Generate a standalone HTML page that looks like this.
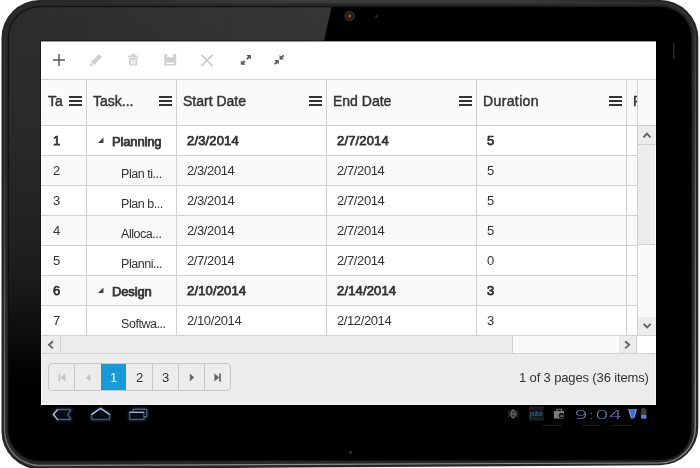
<!DOCTYPE html>
<html>
<head>
<meta charset="utf-8">
<title>TreeGrid</title>
<style>
html,body{margin:0;padding:0;}
body{width:700px;height:468px;overflow:hidden;background:#fff;position:relative;font-family:"Liberation Sans",sans-serif;}
.abs{position:absolute;}
#screen{position:absolute;left:41px;top:41px;width:615px;height:364px;background:#fff;overflow:hidden;font-size:13px;color:#333;box-shadow:0 0 0 1px rgba(0,0,0,0.35);}
.hl{position:absolute;left:0;height:1px;background:#d1d1d1;}
.vl{position:absolute;width:1px;background:#d1d1d1;}
.hd,.c,.pg,.pi{will-change:transform;}
.hd{position:absolute;top:52px;font-size:14px;color:#333;-webkit-text-stroke:0.45px #333;white-space:nowrap;line-height:16px;}
.mn{position:absolute;top:55px;width:13px;height:10px;}
.mn i{position:absolute;left:0;width:13px;height:2px;background:#333;}
.c{position:absolute;white-space:nowrap;line-height:16px;font-size:13px;color:#333;letter-spacing:-0.4px;}
.pg{position:absolute;top:15.5px;width:25px;text-align:center;font-size:13px;line-height:16px;color:#333;}
.b{-webkit-text-stroke:0.75px #333;letter-spacing:0.15px;}
.t{font-size:12.5px;letter-spacing:-0.45px;}
.b.t{font-size:13px;letter-spacing:-0.15px;}
</style>
</head>
<body>
<svg class="abs" id="tab" style="left:0;top:0" width="700" height="468" viewBox="0 0 700 468">
 <defs>
  <linearGradient id="lg1" gradientUnits="userSpaceOnUse" x1="0" y1="0" x2="115" y2="538"><stop offset="0" stop-color="#303030"/><stop offset="0.3" stop-color="#383838"/><stop offset="0.374" stop-color="#464646"/><stop offset="0.638" stop-color="#6a6a6a"/><stop offset="0.85" stop-color="#777"/><stop offset="0.96" stop-color="#959595"/><stop offset="1" stop-color="#888"/></linearGradient>
  <linearGradient id="gg" x1="0" y1="0" x2="0" y2="1"><stop offset="0" stop-color="#2d2d2d"/><stop offset="0.3" stop-color="#292929"/><stop offset="0.5" stop-color="#212121"/><stop offset="0.6" stop-color="#1b1b1b"/><stop offset="0.72" stop-color="#0c0c0c"/><stop offset="0.83" stop-color="#000"/></linearGradient>
  <linearGradient id="tg" x1="0" y1="0" x2="1" y2="0"><stop offset="0.04" stop-color="#fff" stop-opacity="0"/><stop offset="0.4" stop-color="#fff" stop-opacity="0.1"/><stop offset="0.75" stop-color="#fff" stop-opacity="0.1"/><stop offset="0.97" stop-color="#fff" stop-opacity="0"/></linearGradient>
  <linearGradient id="hg" x1="0" y1="0" x2="1" y2="0"><stop offset="0" stop-color="#fff" stop-opacity="0"/><stop offset="1" stop-color="#fff" stop-opacity="0.045"/></linearGradient>
  <clipPath id="cin"><path d="M39.50 7.30H660.30A30.70 30.70 0 0 1 691.00 38.00V428.94A30.70 30.70 0 0 1 660.30 459.64L39.50 460.26A30.70 30.70 0 0 1 8.80 429.56V38.00A30.70 30.70 0 0 1 39.50 7.30Z"/></clipPath>
 </defs>
 <path d="M39.50 0.00H660.30A38.00 38.00 0 0 1 698.30 38.00V427.25A38.00 38.00 0 0 1 660.30 465.25L39.50 469.25A38.00 38.00 0 0 1 1.50 431.25V38.00A38.00 38.00 0 0 1 39.50 0.00Z" fill="#252525"/>
 <path d="M39.50 2.40H660.30A35.60 35.60 0 0 1 695.90 38.00V427.80A35.60 35.60 0 0 1 660.30 463.40L39.50 466.30A35.60 35.60 0 0 1 3.90 430.70V38.00A35.60 35.60 0 0 1 39.50 2.40Z" fill="url(#lg1)"/>
 <path d="M39.50 3.70H660.30A34.30 34.30 0 0 1 694.60 38.00V428.10A34.30 34.30 0 0 1 660.30 462.40L39.50 464.70A34.30 34.30 0 0 1 5.20 430.40V38.00A34.30 34.30 0 0 1 39.50 3.70Z" fill="#272727"/>
 <path d="M39.50 6.30H660.30A31.70 31.70 0 0 1 692.00 38.00V428.71A31.70 31.70 0 0 1 660.30 460.41L39.50 461.49A31.70 31.70 0 0 1 7.80 429.79V38.00A31.70 31.70 0 0 1 39.50 6.30Z" fill="#101010"/>
 <path d="M39.50 7.30H660.30A30.70 30.70 0 0 1 691.00 38.00V428.94A30.70 30.70 0 0 1 660.30 459.64L39.50 460.26A30.70 30.70 0 0 1 8.80 429.56V38.00A30.70 30.70 0 0 1 39.50 7.30Z" fill="#000"/>
 <rect x="30" y="0" width="640" height="2.6" fill="url(#tg)"/>
 <g clip-path="url(#cin)"><path d="M0 0H333L324 41L231 468H0Z" fill="url(#gg)"/><path d="M0 0H333L324 41H0Z" fill="url(#hg)"/></g>
</svg>
<svg class="abs" id="bezel" style="left:0;top:0" width="700" height="468" viewBox="0 0 700 468">
 <circle cx="275" cy="16.4" r="3.8" fill="#343434"/>
 <circle cx="349.6" cy="16" r="5" fill="#333"/>
 <circle cx="349.6" cy="16" r="3.5" fill="#1c1512"/>
 <circle cx="349.8" cy="16" r="1.7" fill="#b0490f"/>
 <circle cx="376.6" cy="16.4" r="1.4" fill="#262626"/>
 <circle cx="350.5" cy="452.3" r="1.5" fill="#303030"/>
 <rect x="673" y="43" width="1.4" height="16" fill="#2a2a2a"/>
</svg>
<div id="screen">
 <!-- toolbar -->
 <div class="abs" id="toolbar" style="left:0;top:0;width:615px;height:38px;background:#fff;">
  <svg class="abs" style="left:0;top:0" width="615" height="38" viewBox="0 0 615 38">
   <!-- add -->
   <path d="M12 19H24M18 13V25" stroke="#555" stroke-width="1.4" fill="none"/>
   <!-- edit (pencil) -->
   <g fill="#d0d0d0">
    <path d="M57.9 13 L61 16.1 L53 24.1 L49.9 21 Z"/>
    <path d="M49.3 21.8 L52.2 24.7 L48.6 25.4 Z"/>
   </g>
   <!-- delete (trash) -->
   <g fill="#d0d0d0">
    <rect x="87" y="14.6" width="10.2" height="1.8"/>
    <rect x="89.8" y="13.1" width="4.6" height="1.8"/>
    <path d="M88 17H96.2V24.6H88Z M89.9 18.4V23.5H91.4V18.4Z M92.8 18.4V23.5H94.3V18.4Z" fill-rule="evenodd"/>
   </g>
   <!-- save -->
   <path d="M123.2 13H135.2V24.5H123.2Z M126.3 13V16.3H132.2V13Z M125.2 21.5V23H133.2V21.5Z" fill="#d0d0d0" fill-rule="evenodd"/>
   <!-- cancel -->
   <path d="M160.5 13.8L171.5 24.8M171.5 13.8L160.5 24.8" stroke="#cbcbcb" stroke-width="1.7" fill="none"/>
   <!-- expand -->
   <g fill="#585858" stroke="#585858">
    <path d="M208.4 15.6L205.9 18.1M201.4 22.3L203.9 19.8" stroke-width="1.9" fill="none"/>
    <path d="M205.4 14.1H209.9V18.6Z" stroke="none"/>
    <path d="M199.9 19.3V23.8H204.4Z" stroke="none"/>
   </g>
   <!-- collapse -->
   <g fill="#585858" stroke="#585858">
    <path d="M240 16.9L242.6 14.3M236.3 20.6L233.7 23.2" stroke-width="1.8" fill="none"/>
    <path d="M238.5 13.9V18.4H243Z" stroke="none"/>
    <path d="M233.3 19.1H237.8V23.6Z" stroke="none"/>
   </g>
  </svg>
 </div>
 <div class="abs" style="left:0;top:0;width:615px;height:1px;background:#9a9a9a;"></div>
 <!-- header -->
 <div class="abs" style="left:0;top:38px;width:615px;height:46px;background:#fafafa;"></div>
 <!-- rows -->
 <div class="abs" style="left:0;top:114px;width:597px;height:30px;background:#f9f9f9;"></div>
 <div class="abs" style="left:0;top:174px;width:597px;height:30px;background:#f9f9f9;"></div>
 <div class="abs" style="left:0;top:234px;width:597px;height:30px;background:#f9f9f9;"></div>
 <!-- lines -->
 <div class="hl" style="top:38px;width:615px;"></div>
 <div class="hl" style="top:84px;width:615px;"></div>
 <div class="hl" style="top:114px;width:597px;"></div>
 <div class="hl" style="top:144px;width:597px;"></div>
 <div class="hl" style="top:174px;width:597px;"></div>
 <div class="hl" style="top:204px;width:597px;"></div>
 <div class="hl" style="top:234px;width:597px;"></div>
 <div class="hl" style="top:264px;width:597px;"></div>
 <div class="hl" style="top:294px;width:597px;"></div>
 <div class="vl" style="left:45px;top:38px;height:257px;"></div>
 <div class="vl" style="left:135px;top:38px;height:257px;"></div>
 <div class="vl" style="left:285px;top:38px;height:257px;"></div>
 <div class="vl" style="left:435px;top:38px;height:257px;"></div>
 <div class="vl" style="left:585px;top:38px;height:257px;"></div>
 <div class="vl" style="left:596px;top:38px;height:257px;"></div>
 <!-- header text -->
 <div class="hd" style="left:7px;">Ta</div>
 <div class="hd" style="left:52px;">Task...</div>
 <div class="hd" style="left:142px;">Start Date</div>
 <div class="hd" style="left:292px;">End Date</div>
 <div class="hd" style="left:442px;letter-spacing:0.38px;">Duration</div>
 <div class="hd" style="left:592px;width:4px;overflow:hidden;">Progress</div>
 <div class="mn" style="left:28px;"><i style="top:0"></i><i style="top:4px"></i><i style="top:8px"></i></div>
 <div class="mn" style="left:118px;"><i style="top:0"></i><i style="top:4px"></i><i style="top:8px"></i></div>
 <div class="mn" style="left:268px;"><i style="top:0"></i><i style="top:4px"></i><i style="top:8px"></i></div>
 <div class="mn" style="left:418px;"><i style="top:0"></i><i style="top:4px"></i><i style="top:8px"></i></div>
 <div class="mn" style="left:568px;"><i style="top:0"></i><i style="top:4px"></i><i style="top:8px"></i></div>
 <!-- cells -->
 <div class="c b" style="left:12px;top:92px;">1</div>
 <div class="c b t" style="left:71px;top:93px;">Planning</div>
 <div class="c b" style="left:146px;top:92px;">2/3/2014</div>
 <div class="c b" style="left:296px;top:92px;">2/7/2014</div>
 <div class="c b" style="left:446px;top:92px;">5</div>

 <div class="c" style="left:12px;top:122px;">2</div>
 <div class="c t" style="left:80.4px;top:125px;">Plan ti...</div>
 <div class="c" style="left:146px;top:122px;">2/3/2014</div>
 <div class="c" style="left:296px;top:122px;">2/7/2014</div>
 <div class="c" style="left:446px;top:122px;">5</div>

 <div class="c" style="left:12px;top:152px;">3</div>
 <div class="c t" style="left:80.4px;top:155px;">Plan b...</div>
 <div class="c" style="left:146px;top:152px;">2/3/2014</div>
 <div class="c" style="left:296px;top:152px;">2/7/2014</div>
 <div class="c" style="left:446px;top:152px;">5</div>

 <div class="c" style="left:12px;top:182px;">4</div>
 <div class="c t" style="left:80.4px;top:185px;">Alloca...</div>
 <div class="c" style="left:146px;top:182px;">2/3/2014</div>
 <div class="c" style="left:296px;top:182px;">2/7/2014</div>
 <div class="c" style="left:446px;top:182px;">5</div>

 <div class="c" style="left:12px;top:212px;">5</div>
 <div class="c t" style="left:80.4px;top:215px;">Planni...</div>
 <div class="c" style="left:146px;top:212px;">2/7/2014</div>
 <div class="c" style="left:296px;top:212px;">2/7/2014</div>
 <div class="c" style="left:446px;top:212px;">0</div>

 <div class="c b" style="left:12px;top:242px;">6</div>
 <div class="c b t" style="left:71px;top:243px;">Design</div>
 <div class="c b" style="left:146px;top:242px;">2/10/2014</div>
 <div class="c b" style="left:296px;top:242px;">2/14/2014</div>
 <div class="c b" style="left:446px;top:242px;">3</div>

 <div class="c" style="left:12px;top:272px;">7</div>
 <div class="c t" style="left:80.4px;top:275px;">Softwa...</div>
 <div class="c" style="left:146px;top:272px;">2/10/2014</div>
 <div class="c" style="left:296px;top:272px;">2/12/2014</div>
 <div class="c" style="left:446px;top:272px;">3</div>

 <svg class="abs" style="left:56px;top:96px" width="7" height="7" viewBox="0 0 7 7"><path d="M6.5 0.4V5.9H0.8Z" fill="#444"/></svg>
 <svg class="abs" style="left:56px;top:246px" width="7" height="7" viewBox="0 0 7 7"><path d="M6.5 0.4V5.9H0.8Z" fill="#444"/></svg>
 <!-- vertical scrollbar -->
 <div class="abs" id="vsb" style="left:597px;top:85px;width:18px;height:210px;background:#fafafa;">
  <div class="abs" style="left:0;top:0;width:18px;height:19px;background:#ececec;"></div>
  <div class="abs" style="left:0;top:19px;width:17px;height:99px;background:#ececec;"></div>
  <div class="abs" style="left:0;top:118px;width:17px;height:1px;background:#cfcfcf;"></div>
  <div class="abs" style="left:0;top:18px;width:18px;height:1px;background:#d1d1d1;"></div>
  <div class="abs" style="left:0;top:191px;width:18px;height:19px;background:#ececec;"></div>
  <div class="abs" style="left:0;top:209px;width:18px;height:1px;background:#d1d1d1;"></div>
  <svg class="abs" style="left:0;top:0" width="18" height="210" viewBox="0 0 18 210"><path d="M5.4 11.3L8.95 7.7L12.5 11.3" stroke="#626262" stroke-width="1.9" fill="none"/><path d="M5.6 197.8L9.15 201.5L12.7 197.8" stroke="#626262" stroke-width="1.9" fill="none"/></svg>
 </div>
 <!-- horizontal scrollbar -->
 <div class="abs" id="hsb" style="left:0;top:295px;width:615px;height:17px;background:#fff;">
  <div class="abs" style="left:0;top:0;width:471px;height:17px;background:#ececec;"></div>
  <div class="abs" style="left:472px;top:0;width:106px;height:17px;background:#fafafa;"></div>
  <div class="abs" style="left:578px;top:0;width:17px;height:17px;background:#ececec;"></div>
  <div class="vl" style="left:19px;top:0;height:17px;"></div>
  <div class="vl" style="left:0;top:0;height:17px;background:#f6f6f6;"></div>
  <div class="vl" style="left:471px;top:0;height:17px;"></div>
  <div class="vl" style="left:595px;top:0;height:17px;"></div>
  <svg class="abs" style="left:0;top:0" width="615" height="17" viewBox="0 0 615 17"><path d="M12 5.3L8 8.85L12 12.4" stroke="#626262" stroke-width="1.9" fill="none"/><path d="M584.1 5.3L588.1 8.85L584.1 12.4" stroke="#626262" stroke-width="1.9" fill="none"/></svg>
 </div>
 <div class="hl" style="top:312px;width:615px;"></div>
 <!-- pager -->
 <div class="abs" id="pager" style="left:0;top:313px;width:615px;height:51px;background:#ececec;box-shadow:inset 1px 0 0 #f5f5f5,inset -1px 0 0 #f5f5f5,inset 0 -1px 0 #f5f5f5;">
  <div class="abs" style="left:7px;top:9px;width:183px;height:28px;border:1px solid #c8c8c8;border-radius:4px;box-sizing:border-box;background:#ececec;"></div>
  <div class="abs" style="left:60px;top:10px;width:25px;height:26px;background:#189ad7;"></div>
  <div class="vl" style="left:33px;top:10px;height:26px;background:#c8c8c8;"></div>
  <div class="vl" style="left:111px;top:10px;height:26px;background:#c8c8c8;"></div>
  <div class="vl" style="left:137px;top:10px;height:26px;background:#c8c8c8;"></div>
  <div class="vl" style="left:163px;top:10px;height:26px;background:#c8c8c8;"></div>
  <div class="pg" style="left:60px;color:#fff;">1</div>
  <div class="pg" style="left:86px;">2</div>
  <div class="pg" style="left:112px;">3</div>
  <svg class="abs" style="left:0;top:0" width="240" height="51" viewBox="0 0 240 51">
   <g fill="#c3c3c3"><rect x="17.7" y="19.6" width="1.6" height="7.9"/><path d="M24.4 19.6V27.5L19.5 23.55Z"/>
   <path d="M49.4 19.8V27.6L44.9 23.7Z"/></g>
   <g fill="#666"><path d="M148.8 19.5V27.6L153.2 23.55Z"/>
   <path d="M173.4 19.5V27.6L178.2 23.55Z"/><rect x="178.2" y="19.5" width="1.7" height="8.1"/></g>
  </svg>
  <div class="abs pi" style="right:7px;top:15.5px;font-size:13px;line-height:16px;color:#333;white-space:nowrap;letter-spacing:-0.14px;">1 of 3 pages (36 items)</div>
 </div>
</div>
<svg class="abs" id="navbar" style="left:41px;top:405px;will-change:transform" width="615" height="24" viewBox="0 0 615 24">
 <defs><filter id="gl" x="-20%" y="-40%" width="140%" height="180%"><feGaussianBlur stdDeviation="1.1"/></filter></defs>
 <g fill="none" stroke="#3a5280" stroke-width="2.4" filter="url(#gl)" opacity="0.8">
  <path d="M12.4 9.5L16.5 4.6H29.6L26.6 9.5L29.6 14.4H16.5Z"/>
  <path d="M50.8 9.4L59.6 3.4L68.4 9.4V14.2H50.8Z"/>
  <path d="M92.4 6.8V4.4H105.6V11.6H103.2M88.8 7.4H102.8V14.4H88.8Z"/>
 </g>
 <g fill="#070b12" stroke="#4f5d80" stroke-width="1.1" stroke-linejoin="round">
  <path d="M12.4 9.5L16.5 4.6H29.6L26.6 9.5L29.6 14.4H16.5Z"/>
  <path d="M50.8 9.4L59.6 3.4L68.4 9.4V14.2H50.8Z"/>
  <path d="M92.4 4.4H105.6V11.6H92.4Z"/>
  <path d="M88.8 7.4H102.8V14.4H88.8Z"/>
 </g>
 <g fill="none" stroke="#a9b6d2" stroke-width="1.3" stroke-linejoin="round" stroke-linecap="round">
  <path d="M16.5 4.6L12.4 9.5L16.5 14.4"/>
  <path d="M50.8 9.4L59.6 3.4L68.4 9.4"/>
  <path d="M88.8 7.4H102.8"/>
 </g>
 <!-- status -->
 <g>
  <ellipse cx="472.2" cy="9" rx="2.7" ry="4.4" fill="#6a6a6a"/>
  <rect x="470.7" y="6.4" width="3" height="5.2" fill="#2c2c2c"/>
  <path d="M467.2 6.4L477.2 11.6M477.2 6.4L467.2 11.6M466.8 9H477.6" stroke="#5a5a5a" stroke-width="0.8" fill="none"/>
 </g>
 <rect x="488" y="1.5" width="14.6" height="14" fill="#151617"/>
 <rect x="488" y="1.5" width="14.6" height="2.6" fill="#1e1f20"/>
 <rect x="488" y="12.6" width="14.6" height="2.9" fill="#1e1f20"/>
 <text x="495.3" y="11" font-family="Liberation Sans, sans-serif" font-size="6.4" fill="#2b7fa3" text-anchor="middle" textLength="13" lengthAdjust="spacingAndGlyphs">pulse</text>
 <g>
  <rect x="513" y="6" width="10" height="7.6" fill="#7a7a7a"/>
  <path d="M516 6V4.2H520.6V6" stroke="#7a7a7a" stroke-width="1.1" fill="none"/>
  <circle cx="520.6" cy="10.6" r="2.9" fill="#1a1a1a"/>
  <path d="M518.8 11.6A1.2 1.2 0 0 1 520 10.2A1.4 1.4 0 0 1 522.4 10.6A0.9 0.9 0 0 1 522.4 12H519.2Z" fill="#555"/>
 </g>
 <text x="533" y="13.7" font-family="DejaVu Sans, Liberation Sans, sans-serif" font-weight="200" font-size="12.6" fill="#798cc2" textLength="48.6" lengthAdjust="spacingAndGlyphs">9:04</text>
 <path d="M586.8 4H596.4L593 13.6H590.2Z" fill="#3f6fd0"/>
 <path d="M588.2 4.6L590.4 13.2M595 4.6L592.8 13.2" stroke="#7fa6ee" stroke-width="0.8" fill="none"/>
 <rect x="601.2" y="2.8" width="2.6" height="2" fill="#444"/>
 <rect x="600" y="4.2" width="5.4" height="6" fill="#3a3c42"/>
 <rect x="600" y="9.9" width="5.4" height="3.7" fill="#4d84e8"/>
 <g stroke="#262626" stroke-width="1"><path d="M502 20.4H521M541 20.4H559.8M571.3 20.4H590.6"/></g>
</svg>
</body>
</html>
